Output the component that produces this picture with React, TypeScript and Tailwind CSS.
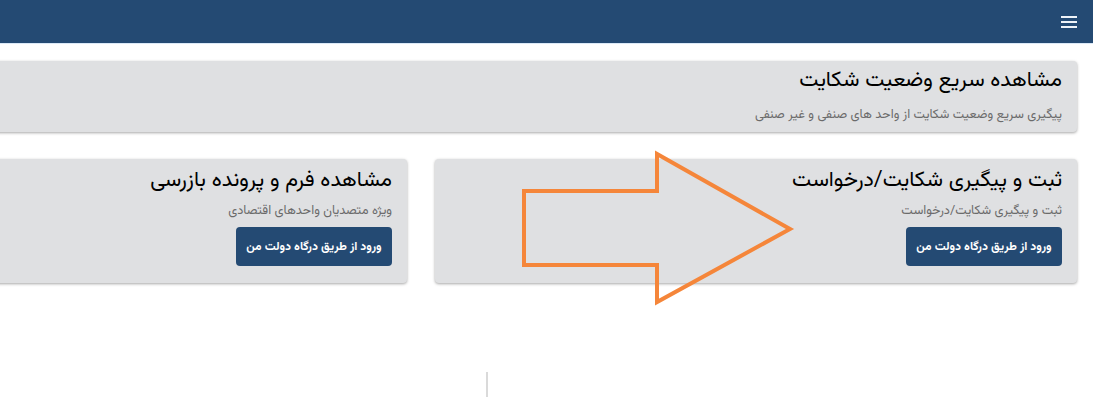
import React from 'react';

const font = { fontFamily: "'Vazirmatn', 'DejaVu Sans', 'Noto Sans', sans-serif" };

// Card with title, subtitle and optional login button
const ServiceCard = ({ title, subtitle, withButton }: { title: string; subtitle: string; withButton?: boolean }) => (
    <div className="flex-1 rounded-[4px] bg-[#dfe0e2] px-[15px] pt-[7px] pb-[17px] shadow-[0_1px_3px_rgba(0,0,0,0.35)]">
        <div className="text-[21.5px] leading-[30px] text-black">{title}</div>
        <div className="mt-[5px] text-[12.8px] leading-[20px] text-[#6b6b6b]">{subtitle}</div>
        {withButton && (
            <button className="mt-[6px] h-[39px] w-[156px] rounded-[4px] bg-[#244a73] text-[12px] font-bold text-white">
                ورود از طریق درگاه دولت من
            </button>
        )}
    </div>
);

export default function App() {
    return (
        <div className="relative h-[398px] w-[1093px] overflow-hidden bg-white" style={font}>
            {/* Header */}
            <div className="flex h-[44px] items-center justify-end border-b border-[#dbe9f7] bg-[#244a73] px-[16px]">
                <div className="flex flex-col gap-[3px]">
                    <span className="block h-[2px] w-[16px] bg-[#eef3f8]" />
                    <span className="block h-[2px] w-[16px] bg-[#eef3f8]" />
                    <span className="block h-[2px] w-[16px] bg-[#eef3f8]" />
                </div>
            </div>

            {/* Content, overflowing to the left */}
            <div dir="rtl" className="pr-[16px] pt-[17px]">
                <div className="flex w-[1312px] flex-col gap-[27px]">
                    <div className="rounded-[4px] bg-[#dfe0e2] px-[15px] pt-[5px] pb-[7px] shadow-[0_1px_3px_rgba(0,0,0,0.35)]">
                        <div className="text-[21.5px] leading-[30px] text-black">مشاهده سریع وضعیت شکایت</div>
                        <div className="mt-[9px] text-[12.8px] leading-[20px] text-[#6b6b6b]">
                            پیگیری سریع وضعیت شکایت از واحد های صنفی و غیر صنفی
                        </div>
                    </div>
                    <div className="flex gap-[28px]">
                        <ServiceCard title="ثبت و پیگیری شکایت/درخواست" subtitle="ثبت و پیگیری شکایت/درخواست" withButton />
                        <ServiceCard title="مشاهده فرم و پرونده بازرسی" subtitle="ویژه متصدیان واحدهای اقتصادی" withButton />
                    </div>
                </div>
            </div>

            <div className="ml-[486px] mt-[89px] h-[25px] w-[2px] bg-[#dadada]" />

            {/* Orange arrow annotation */}
            <svg className="pointer-events-none absolute left-0 top-0" width="1093" height="398">
                <polygon
                    points="524,191 657,191 657,154 790,229 657,302 657,265 524,265"
                    fill="none"
                    stroke="#f5863a"
                    strokeWidth="4"
                    strokeLinejoin="miter"
                />
            </svg>
        </div>
    );
}
